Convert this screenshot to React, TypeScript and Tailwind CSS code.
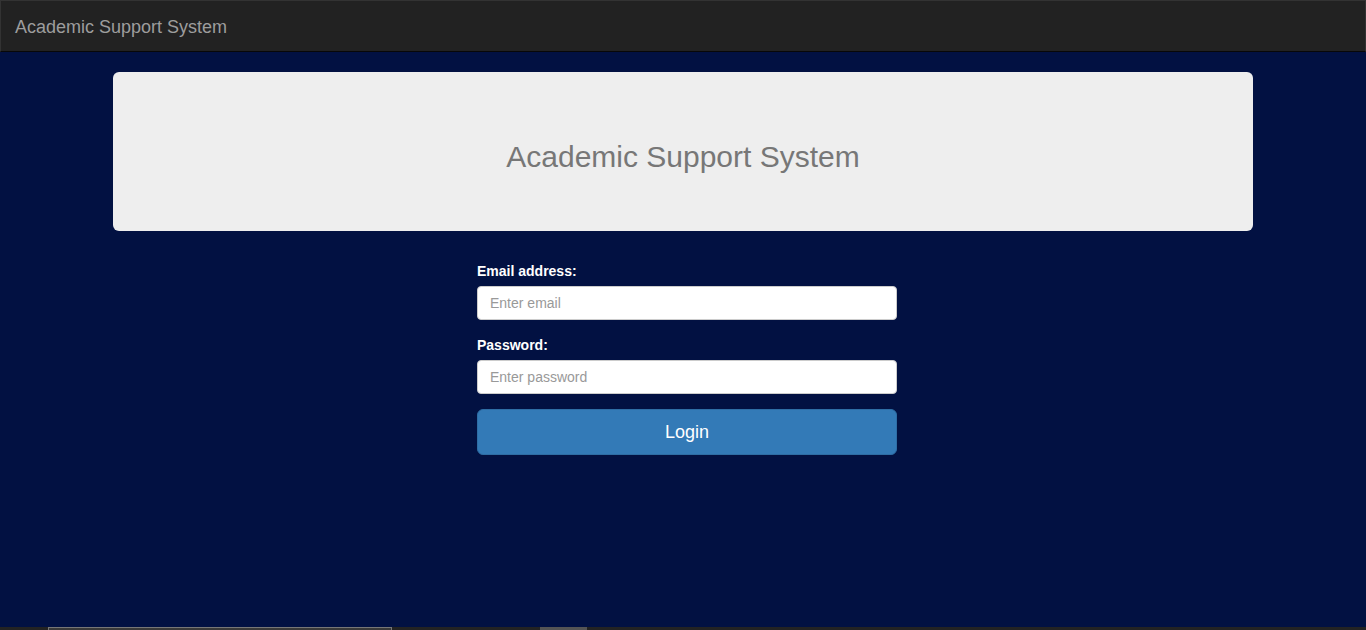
export default function App() {
  return (
    <div
      className="h-[630px] flex flex-col bg-[#021142] overflow-hidden"
      style={{ fontFamily: '"Liberation Sans", Arial, sans-serif' }}
    >
      <nav className="h-[52px] shrink-0 bg-[#222222] border border-[#333] border-b-[#080808] flex items-center pt-[2px] px-[14px]">
        <span className="text-[18px] leading-5 text-[#9d9d9d]">Academic Support System</span>
      </nav>

      <main className="flex-1 flex flex-col items-center pt-[20px]">
        <div className="w-[1140px] h-[159px] bg-[#eeeeee] rounded-[6px] flex justify-center pt-[68px]">
          <h2 className="text-[30px] leading-[33px] text-[#777777]">Academic Support System</h2>
        </div>

        <form className="w-[420px] mt-[30px] ml-[8px]" onSubmit={(e) => e.preventDefault()}>
          <div className="mb-[15px]">
            <label className="block text-[14px] leading-5 font-bold text-white mb-[5px]">Email address:</label>
            <input
              type="email"
              placeholder="Enter email"
              className="w-full h-[34px] px-3 bg-white border border-[#cccccc] rounded-[4px] text-[14px] text-[#555] placeholder:text-[#999999] outline-none"
            />
          </div>
          <div className="mb-[15px]">
            <label className="block text-[14px] leading-5 font-bold text-white mb-[5px]">Password:</label>
            <input
              type="password"
              placeholder="Enter password"
              className="w-full h-[34px] px-3 bg-white border border-[#cccccc] rounded-[4px] text-[14px] text-[#555] placeholder:text-[#999999] outline-none"
            />
          </div>
          <button
            type="submit"
            className="w-full h-[46px] bg-[#337ab7] border border-[#2e6da4] rounded-[6px] text-white text-[18px]"
          >
            Login
          </button>
        </form>
      </main>

      <div className="h-[3px] shrink-0 bg-[#232323] relative">
        <div className="absolute left-[48px] top-0 w-[344px] h-[3px] bg-[#3a3a3a] border-t border-x border-[#777]" />
        <div className="absolute left-[540px] top-0 w-[47px] h-[3px] bg-[#555]" />
      </div>
    </div>
  );
}
